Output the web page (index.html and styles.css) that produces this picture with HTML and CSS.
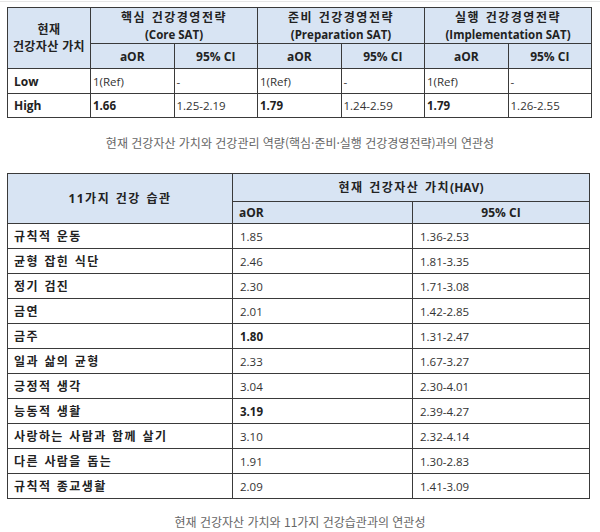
FILE: index.html
```html
<!DOCTYPE html>
<html lang="ko">
<head>
<meta charset="utf-8">
<link rel="stylesheet" href="styles.css">
</head>
<body>
<div class="page">
  <table class="t1">
    <colgroup>
      <col class="c1a"><col class="c1"><col class="c1"><col class="c1"><col class="c1"><col class="c1"><col class="c1">
    </colgroup>
    <tr class="h1">
      <th rowspan="2" class="first">현재<br>건강자산 가치</th>
      <th colspan="2"><span class="ko">핵심 건강경영전략</span><br><span class="en">(Core SAT)</span></th>
      <th colspan="2"><span class="ko">준비 건강경영전략</span><br><span class="en">(Preparation SAT)</span></th>
      <th colspan="2"><span class="ko">실행 건강경영전략</span><br><span class="en">(Implementation SAT)</span></th>
    </tr>
    <tr class="h2">
      <th>aOR</th><th>95% CI</th><th>aOR</th><th>95% CI</th><th>aOR</th><th>95% CI</th>
    </tr>
    <tr class="r">
      <td class="lab">Low</td><td>1(Ref)</td><td>-</td><td>1(Ref)</td><td>-</td><td>1(Ref)</td><td>-</td>
    </tr>
    <tr class="r last">
      <td class="lab">High</td><td class="b">1.66</td><td>1.25-2.19</td><td class="b">1.79</td><td>1.24-2.59</td><td class="b">1.79</td><td>1.26-2.55</td>
    </tr>
  </table>
  <p class="cap cap1">현재 건강자산 가치와 건강관리 역량(핵심·준비·실행 건강경영전략)과의 연관성</p>

  <table class="t2">
    <colgroup>
      <col class="c2a"><col class="c2b"><col class="c2c">
    </colgroup>
    <tr class="g1">
      <th rowspan="2" class="ko">11가지 건강 습관</th>
      <th colspan="2"><span class="ko">현재 건강자산 가치</span>(HAV)</th>
    </tr>
    <tr class="g2"><th>aOR</th><th>95% CI</th></tr>
    <tr class="r"><td class="lab ko">규칙적 운동</td><td class="pad">1.85</td><td class="pad">1.36-2.53</td></tr>
    <tr class="r"><td class="lab ko">균형 잡힌 식단</td><td class="pad">2.46</td><td class="pad">1.81-3.35</td></tr>
    <tr class="r"><td class="lab ko">정기 검진</td><td class="pad">2.30</td><td class="pad">1.71-3.08</td></tr>
    <tr class="r"><td class="lab ko">금연</td><td class="pad">2.01</td><td class="pad">1.42-2.85</td></tr>
    <tr class="r"><td class="lab ko">금주</td><td class="pad b">1.80</td><td class="pad">1.31-2.47</td></tr>
    <tr class="r"><td class="lab ko">일과 삶의 균형</td><td class="pad">2.33</td><td class="pad">1.67-3.27</td></tr>
    <tr class="r"><td class="lab ko">긍정적 생각</td><td class="pad">3.04</td><td class="pad">2.30-4.01</td></tr>
    <tr class="r"><td class="lab ko">능동적 생활</td><td class="pad b">3.19</td><td class="pad">2.39-4.27</td></tr>
    <tr class="r"><td class="lab ko">사랑하는 사람과 함께 살기</td><td class="pad">3.10</td><td class="pad">2.32-4.14</td></tr>
    <tr class="r"><td class="lab ko">다른 사람을 돕는</td><td class="pad">1.91</td><td class="pad">1.30-2.83</td></tr>
    <tr class="r"><td class="lab ko">규칙적 종교생활</td><td class="pad">2.09</td><td class="pad">1.41-3.09</td></tr>
  </table>
  <p class="cap cap2">현재 건강자산 가치와 11가지 건강습관과의 연관성</p>
</div>
</body>
</html>
```

FILE: styles.css
```css
html, body {
  margin: 0;
  padding: 0;
  background: #ffffff;
}
body {
  font-family: "Open Sans", "Noto Sans CJK KR", sans-serif;
  color: #2a2a2a;
  font-size: 11.5px;
  border-top: 1px solid #e6e6e6;
  margin-top: 1px;
}
.page {
  display: flex;
  flex-direction: column;
  align-items: flex-start;
  padding: 5px 0 0 7px;
}
table {
  border-collapse: collapse;
  table-layout: fixed;
}
th, td {
  border: 1px solid #3a3a3a;
  padding: 0;
  overflow: hidden;
  white-space: nowrap;
}
th {
  background: #d8e4f3;
  font-weight: 700;
  text-align: center;
  color: #222;
  font-size: 12px;
  line-height: 17px;
}
td {
  text-align: left;
  color: #333;
}
.ko {
  letter-spacing: 1.5px;
  word-spacing: 1px;
}
.en { font-size: 11.5px; }
th.first { letter-spacing: 0.4px; }
.t1 { width: 584px; }
.t1 .c1a { width: 83px; }
.t1 .c1 { width: 83.5px; }
.t1 .h1 { height: 36px; }
.t1 .h2 { height: 25px; }
.t1 .r { height: 25px; }
.t1 .r.last { height: 24px; }
.t1 td { padding-left: 2px; }
.t1 td.lab { padding-left: 6px; font-weight: 700; color: #222; font-size: 12px; }
.b { font-weight: 700; color: #222; }

.cap {
  margin: 0;
  align-self: stretch;
  text-align: center;
  font-family: "Noto Sans CJK KR", sans-serif;
  font-size: 12px;
  line-height: 20px;
  color: #666;
  padding-right: 7px;
}
.cap1 { margin-top: 15px; }
.cap2 { margin-top: 13px; }

.t2 { width: 582px; margin-top: 20px; }
.t2 .c2a { width: 225px; }
.t2 .c2b { width: 180px; }
.t2 .c2c { width: 177px; }
.t2 .g1 { height: 28px; }
.t2 .g2 { height: 22px; }
.t2 .g2 th:first-child { text-align: left; padding-left: 6px; }
.t2 .r { height: 25px; }
.t2 td.lab { padding-left: 6px; font-weight: 700; color: #222; font-size: 12px; letter-spacing: 1.4px; }
.t2 td.pad { padding-left: 7px; }
```
